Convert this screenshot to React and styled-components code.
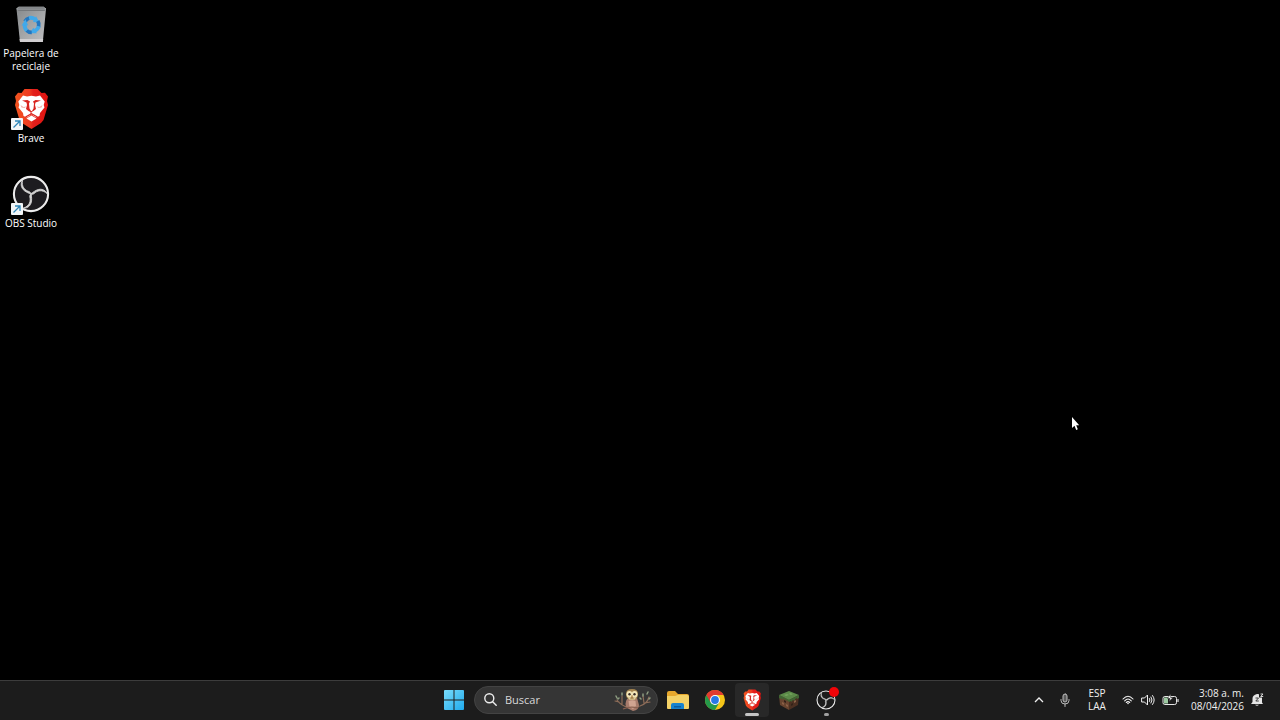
import React from 'react';
import styled, { createGlobalStyle } from 'styled-components';

const GlobalStyle = createGlobalStyle`
  * {
    box-sizing: border-box;
  }

  body {
    margin: 0;
    background: #000;
    color: #fff;
    font-family: 'Open Sans', 'Noto Sans', sans-serif;
  }

  button,
  input {
    font: inherit;
    color: inherit;
  }
`;

const Screen = styled.div`
  position: relative;
  display: flex;
  flex-direction: column;
  min-height: 100vh;
  overflow: hidden;
`;

const Desktop = styled.main`
  flex: 1;
  padding-top: 3px;
`;

const ShortcutList = styled.ul`
  display: flex;
  flex-direction: column;
  width: 62px;
  margin: 0;
  padding: 0;
  list-style: none;
`;

const ShortcutItem = styled.li`
  height: 85px;
`;

const Shortcut = styled.button`
  display: flex;
  flex-direction: column;
  align-items: center;
  gap: 2px;
  width: 100%;
  padding: 0;
  border: 0;
  background: transparent;
  font-size: 10px;
  line-height: 13px;
`;

const ShortcutArt = styled.span`
  position: relative;
  display: flex;
  align-items: center;
  justify-content: center;
  width: 42px;
  height: 42px;
`;

const ShortcutArrow = styled.svg`
  position: absolute;
  left: 1px;
  bottom: 0;
`;

const Taskbar = styled.footer`
  display: grid;
  grid-template-columns: 1fr auto 1fr;
  align-items: center;
  height: 40px;
  padding-bottom: 2px;
  border-top: 1px solid #3c3c3c;
  background: #1c1c1c;
`;

const TaskbarCenter = styled.nav`
  grid-column: 2;
  display: flex;
  align-items: center;
  gap: 3px;
`;

const TaskButton = styled.button`
  position: relative;
  display: flex;
  align-items: center;
  justify-content: center;
  width: 34px;
  height: 34px;
  padding: 0;
  border: 0;
  border-radius: 4px;
  background: ${props => (props.$active ? '#282828' : 'transparent')};
`;

const RunningMark = styled.span`
  position: absolute;
  bottom: 1px;
  width: ${props => (props.$wide ? '14px' : '5px')};
  height: 3px;
  border-radius: 2px;
  background: ${props => (props.$wide ? '#c4c4c4' : '#a0a0a0')};
`;

const RecordingDot = styled.span`
  position: absolute;
  top: 4px;
  right: 4px;
  width: 10px;
  height: 10px;
  border-radius: 50%;
  background: #f00408;
`;

const SearchBox = styled.label`
  display: flex;
  align-items: center;
  gap: 8px;
  width: 184px;
  height: 28px;
  padding: 0 5px 0 9px;
  border: 1px solid #434343;
  border-radius: 14px;
  background: #353535;
`;

const SearchInput = styled.input`
  flex: 1;
  min-width: 0;
  padding: 0;
  border: 0;
  outline: 0;
  background: transparent;
  font-size: 11px;
  line-height: 16px;

  &::placeholder {
    color: #d8d8d8;
    opacity: 1;
  }
`;

const Tray = styled.div`
  display: flex;
  align-items: center;
  justify-content: flex-end;
  padding-right: 16px;
`;

const TrayButton = styled.button`
  display: flex;
  align-items: center;
  justify-content: center;
  gap: ${props => props.$gap || '0'};
  height: 34px;
  padding: 0 ${props => props.$pad || '6px'};
  border: 0;
  background: transparent;
  color: #f0f0f0;
`;

const ClockButton = styled(TrayButton)`
  padding: 0 0 0 6px;
`;

const TrayText = styled.span`
  font-size: 10px;
  line-height: 13px;
  text-align: ${props => props.$align};
`;

const Pointer = styled.svg`
  position: absolute;
  left: 1071px;
  top: 416px;
`;

const BinIcon = () => (
  <svg width="42" height="42" viewBox="0 0 42 42" aria-hidden="true">
    <defs>
      <linearGradient id="bin" x1="0" y1="0" x2="1" y2="1">
        <stop offset="0" stopColor="#85888a" />
        <stop offset="0.5" stopColor="#a3a5a7" />
        <stop offset="1" stopColor="#c0c0c2" />
      </linearGradient>
    </defs>
    <path d="M6.500 6 8.500 4h25L36 6l-3.200 33H10z" fill="url(#bin)" />
    <path d="M7 6h29l-1.500 2H8.500z" fill="#75787b" />
    <path d="m6.500 6 2-2h25L36 6z" fill="#6b6e70" stroke="#b4b7ba" strokeWidth="0.700" />
    <path d="m9.500 36 .5 3h22.800l.4-3z" fill="#d0ced0" />
    <g transform="translate(21.500 22)">
      {[0, 120, 240].map(angle => (
        <g key={angle} transform={`rotate(${angle})`}>
          <path d="M-6.500-3.500A7 7 0 0 1-2-7" fill="none" stroke="#2376bf" strokeWidth="3.800" />
          <path d="M-2.500-7A7 7 0 0 1 3.500-5.700" fill="none" stroke="#41a9ea" strokeWidth="3.800" />
          <path d="M4.500-8.800 8-2.500 1.500-3z" fill="#41a9ea" />
        </g>
      ))}
    </g>
  </svg>
);

const BraveIcon = ({ size }) => (
  <svg width={size} height={size} viewBox="0 0 42 42" aria-hidden="true">
    <defs>
      <linearGradient id={`brave${size}`} x1="0" y1="0" x2="1" y2="0">
        <stop offset="0" stopColor="#f2551f" />
        <stop offset="0.450" stopColor="#ee3a20" />
        <stop offset="0.550" stopColor="#e3201c" />
        <stop offset="1" stopColor="#e0130f" />
      </linearGradient>
    </defs>
    <path
      d="M14.500 1h13l4 4 3.500-.3 3 3.800-1 4.500 1 4-4.500 15-2.500 3-9.500 6-9.500-6-2.500-3L5 17l1-4-1-4.500 3-3.800 3.500.3z"
      fill={`url(#brave${size})`}
    />
    <path
      d="m13 7.500 4 1 4.500-.7 4.500.7 4-1 4.700 6-1 3.500.8 2.500-4.500 5.500-.5 3-3.500 1.500-4.500-3-4.500 3L13.500 28l-.5-3-4.500-5.500.8-2.500-1-3.500z"
      fill="#fff"
    />
    <path d="m21.500 27.500 5 3-5 3-5-3z" fill="#fff" />
    <path
      d="m12 12.500 5.500-.5 2.500 1.500-1 2 .5 5L21 23h1l1.500-2.500.5-5-1-2 2.500-1.500 5.500.5-5.500 2-.5 2.500 1 4-2.500 2-2 1v2.500h-1V24l-2-1-2.500-2 1-4-.5-2.500z"
      fill="#d9241f"
    />
    <path d="m20.500 14 1-.5 1 .5.3 6-1.300 2-1.300-2z" fill="#fff" />
    <path d="m10.500 17 3 2 3-.5-2 1.500-3-.5z" fill="#f4b1a8" />
    <path d="m32.500 17-3 2-3-.5 2 1.500 3-.5z" fill="#f4b1a8" />
    <path d="m15.500 29 6-3.300 6 3.300" fill="none" stroke="#dc241d" strokeWidth="1.300" />
  </svg>
);

const ObsIcon = ({ size, fill }) => (
  <svg width={size} height={size} viewBox="0 0 24 24" aria-hidden="true">
    <circle cx="12" cy="12" r="10.800" fill={fill} stroke="#ececec" strokeWidth="1.300" />
    {[0, 120, 240].map(angle => (
      <path
        key={angle}
        d="M6.700 3.200C5.800 7.500 8.200 9.800 11 10.500q1 .5 1 1.700-1.300-.6-2.700-1.300C5.600 9 5 5.800 6.700 3.200z"
        fill="#d4d4d4"
        stroke="#d4d4d4"
        strokeWidth="0.500"
        transform={`rotate(${angle} 12 12)`}
      />
    ))}
  </svg>
);

const StartIcon = () => (
  <svg width="20" height="20" viewBox="0 0 20 20" aria-hidden="true">
    <defs>
      <linearGradient id="start" gradientUnits="userSpaceOnUse" x1="0" y1="0" x2="20" y2="20">
        <stop offset="0" stopColor="#79dcfb" />
        <stop offset="1" stopColor="#1fa9ec" />
      </linearGradient>
    </defs>
    <path d="M1 0h8.500v9.500H0V1q0-1 1-1zM10.500 0H19q1 0 1 1v8.500h-9.500zM0 10.500h9.500V20H1q-1 0-1-1zM10.500 10.500H20V19q0 1-1 1h-8.500z" fill="url(#start)" />
  </svg>
);

const SearchIcon = () => (
  <svg width="13" height="13" viewBox="0 0 13 13" fill="none" stroke="#ededed" strokeWidth="1.400" strokeLinecap="round" aria-hidden="true">
    <circle cx="5.300" cy="5.300" r="4.500" />
    <path d="m8.700 8.700 3.500 3.500" />
  </svg>
);

const OwlIcon = () => (
  <svg width="38" height="24" viewBox="0 0 38 24" aria-hidden="true">
    <g fill="none" stroke="#8d6c58" strokeWidth="1.200" strokeLinecap="round">
      <path d="M3 12q4 6 11 7l12-1q7-2 9-9M8 16V8M5 14 1 13M30 15l-1-7M31 15l5-1" />
    </g>
    <g fill="none" stroke="#8c9c80" strokeWidth="1.500" strokeLinecap="round">
      <path d="m2 8 1 2M8 5v2M5 10l-1 1M29 6v2M34 4l-1 2M36 10l-1 1M27 11l-1-1" />
    </g>
    <path d="M13 11q-3 5 0 9l6 3q6-1 6-6l-2-7z" fill="#a77b6b" />
    <path d="M12 6q0-5 6-5t6 5q0 6-6 6t-6-6z" fill="#a5854f" />
    <ellipse cx="15.400" cy="6.300" rx="2.900" ry="3.400" fill="#f2e6b8" />
    <ellipse cx="20.600" cy="6.300" rx="2.900" ry="3.400" fill="#f2e6b8" />
    <path d="M14 9q4 4 8 0l-1 2.500h-6z" fill="#eedfae" />
    <circle cx="15.500" cy="6.300" r="1.200" fill="#392c26" />
    <circle cx="20.500" cy="6.300" r="1.200" fill="#392c26" />
    <path d="m17.200 7.500.8 2.200.8-2.200z" fill="#a0682d" />
    <path d="M14.500 13q4-1.500 7 0l.5 5-3 3-3.500-2z" fill="#d0a491" />
    <path d="M9 21q7-3 15-1" stroke="#8a6150" strokeWidth="1.300" fill="none" />
  </svg>
);

const FolderIcon = () => (
  <svg width="22" height="20" viewBox="0 0 22 20" aria-hidden="true">
    <path d="M0 3q0-2 2-2h6l3 3h9q2 0 2 2v5H0z" fill="#e7a82d" />
    <path d="M0 6h8l3-1h9q2 0 2 2v11q0 1-1 1H1q-1 0-1-1z" fill="#f4d267" />
    <path d="M4 19v-4q0-2 2-2h9q2 0 2 2v4z" fill="#1683cf" />
    <path d="M7 16h7v1.500H7z" fill="#0b5da1" />
  </svg>
);

const ChromeIcon = () => (
  <svg width="20" height="20" viewBox="0 0 20 20" aria-hidden="true">
    <circle cx="10" cy="10" r="10" fill="#f5c518" />
    <path d="M10 10 1.340 5A10 10 0 0 0 10 20l4.330-7.500z" fill="#24994a" />
    <path d="M1.340 5A10 10 0 0 1 18.660 5H10l-4.330 7.500z" fill="#e23b30" />
    <circle cx="10" cy="10" r="5" fill="#fff" />
    <circle cx="10" cy="10" r="3.900" fill="#2878e6" />
  </svg>
);

const BlockIcon = () => (
  <svg width="20" height="20" viewBox="0 0 20 20" aria-hidden="true">
    <path d="m0 5 10 4.500V20L1 15z" fill="#68442f" />
    <path d="m20 5-10 4.500V20l9-5z" fill="#4b3022" />
    <path d="m0 5 10-4 10 4-10 5z" fill="#5b8a48" />
    <path d="m0 5 10 5 10-5v3l-2 1v-1l-2 1v2l-2-1-2 2v-1l-2 1-2-2v1l-2-2v1L4 8v2L2 8v1L0 8z" fill="#3f6533" />
    <path d="m5 5 3-1 2 1-3 1zm6-2 3 1-2 1-2-1z" fill="#74a45d" />
    <path d="m3 12 2 1v2l-2-1zm4 2 2 1v2l-2-1zM15 11l2-1v2l-2 1z" fill="#8b6047" />
    <path d="m5 10 2 1v2l-2-1zm7 4 2-1v2l-2 1z" fill="#332219" />
  </svg>
);

const ChevronIcon = () => (
  <svg width="10" height="6" viewBox="0 0 10 6" fill="none" stroke="currentColor" strokeWidth="1.300" aria-hidden="true">
    <path d="m1 5 4-4 4 4" />
  </svg>
);

const MicIcon = () => (
  <svg width="10" height="14" viewBox="0 0 10 14" fill="none" stroke="#bcbcbc" strokeLinecap="round" aria-hidden="true">
    <rect x="3" y="1" width="4" height="8" rx="2" fill="#5c5c5c" />
    <path d="M1 6.500v1a4 3.500 0 0 0 8 0v-1M5 11v2.500" />
  </svg>
);

const WifiIcon = () => (
  <svg width="12" height="10" viewBox="0 0 12 10" fill="none" stroke="currentColor" strokeWidth="1.100" strokeLinecap="round" aria-hidden="true">
    <path d="M1 4q5-5.500 10 0M2.700 5.800q3.300-3.500 6.600 0M4.300 7.500q1.700-1.700 3.400 0" />
    <circle cx="6" cy="8.500" r="0.800" fill="currentColor" stroke="none" />
  </svg>
);

const SpeakerIcon = () => (
  <svg width="14" height="12" viewBox="0 0 14 12" fill="none" stroke="currentColor" strokeLinecap="round" strokeLinejoin="round" aria-hidden="true">
    <path d="M1 4h2.500L6.500 1v10l-3-3H1z" />
    <path d="M8.500 4.500q1 1.500 0 3M10 3q2.200 3 0 6M11.500 1.500q3.500 4.500 0 9" />
  </svg>
);

const BatteryIcon = () => (
  <svg width="17" height="12" viewBox="0 0 17 12" fill="none" aria-hidden="true">
    <rect x="1" y="2.500" width="13.500" height="8" rx="1.800" stroke="#e6e6e6" />
    <path d="M2 3.500h4v6H2z" fill="#9cc9a1" />
    <path d="M16 5v3" stroke="#e6e6e6" strokeWidth="1.200" />
    <path d="M8.500 0 5.500 4.500H8L7 7.500 11 3.500H8.700z" fill="#fff" stroke="#1c1c1c" strokeWidth="0.500" />
  </svg>
);

const BellIcon = () => (
  <svg width="13" height="14" viewBox="0 0 13 14" aria-hidden="true">
    <path d="M6 1q1-.3 2 .3V4.500h3v5l1 1.500H0l1.500-2V5.500Q1.500 2 6 1zM4 11.700h4q-2 2.300-4 0z" fill="#e6e6e6" />
    <path d="M9.500 1h2.500L9.700 3.500h2.500" fill="none" stroke="#e6e6e6" strokeWidth="0.900" />
    <path d="M4.500 5h3L4.800 8h3" fill="none" stroke="#303030" strokeWidth="0.900" />
  </svg>
);

const DesktopShortcut = ({ label, linked, children }) => (
  <ShortcutItem>
    <Shortcut type="button">
      <ShortcutArt>
        {children}
        {linked && (
          <ShortcutArrow width="12" height="12" viewBox="0 0 12 12" aria-hidden="true">
            <rect width="12" height="12" rx="1" fill="#f1f5f7" />
            <path d="m2.500 9.500 6-6M4 3h5v5" fill="none" stroke="#2f86b8" strokeWidth="1.300" />
          </ShortcutArrow>
        )}
      </ShortcutArt>
      {label}
    </Shortcut>
  </ShortcutItem>
);

const App = () => (
  <>
    <GlobalStyle />
    <Screen>
      <Desktop>
        <ShortcutList>
          <DesktopShortcut label="Papelera de reciclaje">
            <BinIcon />
          </DesktopShortcut>
          <DesktopShortcut label="Brave" linked>
            <BraveIcon size={42} />
          </DesktopShortcut>
          <DesktopShortcut label="OBS Studio" linked>
            <ObsIcon size={38} fill="#1d1c20" />
          </DesktopShortcut>
        </ShortcutList>
      </Desktop>

      <Taskbar>
        <TaskbarCenter aria-label="Barra de tareas">
          <TaskButton type="button" aria-label="Inicio">
            <StartIcon />
          </TaskButton>
          <SearchBox>
            <SearchIcon />
            <SearchInput type="text" placeholder="Buscar" aria-label="Buscar" />
            <OwlIcon />
          </SearchBox>
          <TaskButton type="button" aria-label="Explorador de archivos">
            <FolderIcon />
          </TaskButton>
          <TaskButton type="button" aria-label="Google Chrome">
            <ChromeIcon />
          </TaskButton>
          <TaskButton type="button" aria-label="Brave" $active>
            <BraveIcon size={22} />
            <RunningMark $wide />
          </TaskButton>
          <TaskButton type="button" aria-label="Minecraft">
            <BlockIcon />
          </TaskButton>
          <TaskButton type="button" aria-label="OBS Studio">
            <ObsIcon size={20} fill="#1c1c1c" />
            <RecordingDot />
            <RunningMark />
          </TaskButton>
        </TaskbarCenter>

        <Tray>
          <TrayButton type="button" aria-label="Mostrar iconos ocultos" $pad="8px">
            <ChevronIcon />
          </TrayButton>
          <TrayButton type="button" aria-label="Micrófono" $pad="8px">
            <MicIcon />
          </TrayButton>
          <TrayButton type="button" $pad="10px">
            <TrayText $align="center">
              ESP
              <br />
              LAA
            </TrayText>
          </TrayButton>
          <TrayButton type="button" aria-label="Red, volumen y batería" $gap="7px">
            <WifiIcon />
            <SpeakerIcon />
            <BatteryIcon />
          </TrayButton>
          <ClockButton type="button" $gap="7px">
            <TrayText $align="right">
              3:08 a. m.
              <br />
              08/04/2026
            </TrayText>
            <BellIcon />
          </ClockButton>
        </Tray>
      </Taskbar>

      <Pointer width="9" height="15" viewBox="0 0 9 15" aria-hidden="true">
        <path d="M1 1v11l2.500-2.300L5.200 14l1.600-.7L5.200 9.300h3z" fill="#fff" />
      </Pointer>
    </Screen>
  </>
);

export default App;
